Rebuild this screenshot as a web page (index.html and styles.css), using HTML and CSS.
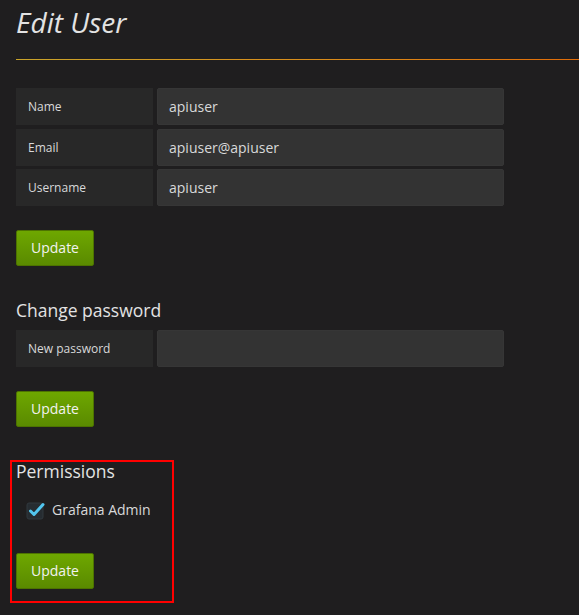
FILE: index.html
```html
<!DOCTYPE html>
<html>
<head>
<meta charset="utf-8">
<link rel="stylesheet" href="styles.css">
</head>
<body>
<div class="page">
  <header class="page-header">
    <h1 class="page-title">Edit User</h1>
  </header>

  <form class="section">
    <div class="rows">
      <div class="row"><span class="label">Name</span><div class="input">apiuser</div></div>
      <div class="row"><span class="label">Email</span><div class="input">apiuser@apiuser</div></div>
      <div class="row"><span class="label">Username</span><div class="input">apiuser</div></div>
    </div>
    <button type="button" class="btn">Update</button>
  </form>

  <h3 class="section-title">Change password</h3>
  <form class="section section-tight">
    <div class="rows">
      <div class="row"><span class="label">New password</span><div class="input"></div></div>
    </div>
    <button type="button" class="btn">Update</button>
  </form>

  <div class="permissions">
    <h3 class="section-title">Permissions</h3>
    <label class="check-row">
      <svg class="check" width="20" height="20" viewBox="0 0 20 20">
        <rect x="1" y="3" width="16" height="16" rx="2" fill="#262c31" stroke="#31383e" stroke-width="1"/>
        <path d="M4.5 11 L8 14.5 L17 4.5" fill="none" stroke="#52c6ef" stroke-width="3" stroke-linecap="round" stroke-linejoin="round"/>
      </svg>
      <span>Grafana Admin</span>
    </label>
    <button type="button" class="btn btn-last">Update</button>
    <div class="highlight"></div>
  </div>
</div>
</body>
</html>
```

FILE: styles.css
```css
html, body {
  margin: 0;
  padding: 0;
  background: #1f1e1f;
  height: 100%;
}
body {
  font-family: "Open Sans", "Liberation Sans", sans-serif;
  color: #d8d9da;
  overflow: hidden;
}
.page {
  position: relative;
  padding-left: 16px;
  padding-top: 3px;
}
.page-header {
  border-bottom: 1px solid transparent;
  border-image: linear-gradient(to right, #c9a42a 0%, #dc8a18 60%, #e06c08 100%) 1;
  padding-bottom: 18px;
}
.page-title {
  margin: 0;
  font-size: 28px;
  line-height: 38px;
  font-style: italic;
  font-weight: 400;
  color: #e3e3e3;
}
.section {
  margin: 28px 0 0 0;
}
.section-tight {
  margin-top: 8px;
}
.rows {
  display: flex;
  flex-direction: column;
  gap: 3.5px;
}
.row {
  display: flex;
  gap: 4px;
  height: 37px;
}
.label {
  width: 137px;
  background: #282828;
  display: flex;
  align-items: center;
  padding-left: 12px;
  box-sizing: border-box;
  font-size: 12px;
  color: #d8d9da;
}
.input {
  width: 347px;
  background: #333333;
  border: 1px solid #363636;
  border-radius: 2px;
  box-sizing: border-box;
  display: flex;
  align-items: center;
  padding-left: 11px;
  font-size: 14px;
  color: #d8d9da;
}
.btn {
  display: block;
  margin-top: 24px;
  width: 78px;
  height: 36px;
  padding: 0;
  border: 1px solid #4d7300;
  border-radius: 2px;
  background: linear-gradient(to bottom, #6ea700 0%, #5a8a00 100%);
  color: #f2f2f2;
  font-family: "Open Sans", "Liberation Sans", sans-serif;
  font-size: 14px;
  line-height: 34px;
}
.section-title {
  margin: 32px 0 0 0;
  font-size: 17.5px;
  line-height: 24px;
  font-weight: 400;
  color: #e3e3e3;
}
.permissions {
  position: relative;
  margin-top: 32px;
}
.permissions .section-title {
  margin-top: 0;
}
.check-row {
  display: flex;
  align-items: center;
  gap: 6px;
  margin-top: 16px;
  margin-left: 10px;
  height: 20px;
  font-size: 14px;
  color: #d8d9da;
}
.check {
  display: block;
  margin-top: 1px;
}
.btn-last {
  margin-top: 34px;
}
.highlight {
  position: absolute;
  left: -6px;
  top: 1px;
  width: 160px;
  height: 139px;
  border: 2px solid #ff0000;
  pointer-events: none;
}
```
